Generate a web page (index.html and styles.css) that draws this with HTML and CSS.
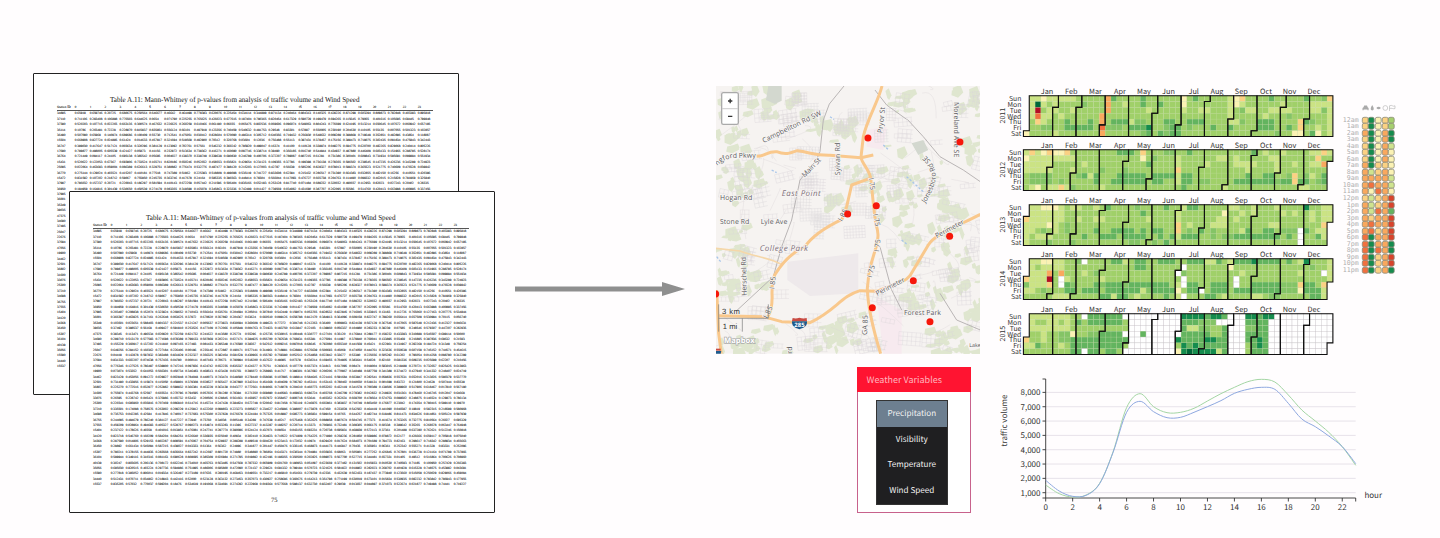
FILE: index.html
```html
<!DOCTYPE html>
<html lang="en">
<head>
<meta charset="utf-8">
<title>Traffic and weather</title>
<link rel="stylesheet" href="styles.css">
</head>
<body>
<main class="figure">
  <section class="papers">
    <article class="paper paper-back"></article>
    <article class="paper paper-front"></article>
  </section>

  <svg class="arrow" viewBox="0 0 172 16"><path d="M0 5.5H147V1L170 8L147 15V10.500H0Z"/></svg>

  <section class="middle">
    <svg class="map" viewBox="18 18 793 803">
      <rect class="land" x="18" y="18" width="793" height="803"/>
      <g id="greens"></g>
      <path class="airport" d="M232 545L445 520V640L300 648L232 600Z"/>
      <path class="pinkish" d="M500 650L575 690V821H520ZM470 150L530 140L520 210L470 200Z"/>
      <g id="streets"></g>
      <path class="pond" d="M175 18H215V62L195 72L168 60ZM605 190L640 180L655 210L625 225Z"/>
      <path class="rail" d="M402 18L358 72L340 120L330 215L318 242L270 300L245 420L215 500L190 590L80 692M592 118L640 170L690 230L760 270L811 305M510 500L545 630L575 690M495 30L530 75L590 118M690 640L740 720L811 750"/>
      <path class="water" d="M520 195L534 208M360 110L372 118M590 290L640 335M20 530L32 545M185 270L200 278M575 480L590 492"/>
      <g class="roads">
        <path class="minor" d="M18 505L90 513C130 530 180 532 212 552"/>
        <path d="M516 18C507 60 470 120 460 170L453 232C457 255 480 268 483 300L490 370L497 430C507 460 505 470 500 495L478 570L472 625C474 690 490 750 512 821"/>
        <path d="M140 229C170 228 170 213 200 215C225 225 240 220 262 212C300 216 310 227 360 226L453 233L490 225"/>
        <path d="M480 295L425 315L410 380L396 418C350 440 305 470 285 500C240 520 215 550 194 585L187 610L186 640C188 675 182 698 172 712"/>
        <path d="M26 707L160 710L215 725L300 728C380 690 390 650 450 632L500 634C550 612 580 612 600 587L655 495C675 462 740 440 811 403"/>
        <path d="M20 630L26 760L34 821"/>
      </g>
      <defs>
        <path id="p-langford" d="M6 276Q34 238 66 234L137 233"/>
        <path id="p-jonesboro" d="M646 370Q690 300 672 262Q660 232 624 208"/>
      </defs>
      <g class="labels">
        <text x="30" y="359" textLength="97">Hogan Rd</text>
        <text x="30" y="432" textLength="88">Stone Rd</text>
        <text x="152" y="432" textLength="80">Lyle Ave</text>
        <text x="582" y="706" textLength="111">Forest Park</text>
        <text class="small" x="778" y="801">Lake</text>
        <text class="city" x="215" y="348" textLength="117">East Point</text>
        <text class="city" x="149" y="512" textLength="145">College Park</text>
        <text transform="translate(161 189) rotate(-26)" textLength="194">Campbellton Rd SW</text>
        <text text-anchor="end"><textPath href="#p-langford" startOffset="100%">ngford Pkwy</textPath></text>
        <text transform="translate(284 293) rotate(-46)" textLength="72">Main St</text>
        <text transform="translate(391 286) rotate(-90)" textLength="98">Sylvan Rd</text>
        <text transform="translate(517 160) rotate(-84)" textLength="79">Pryor St</text>
        <text transform="translate(732 66) rotate(90)" textLength="166">Moreland Ave SE</text>
        <text><textPath href="#p-jonesboro">Jonesboro Rd SE</textPath></text>
        <text transform="translate(476 295) rotate(82)" textLength="36">I 75</text>
        <text transform="translate(489 403) rotate(78)" textLength="38">I 75</text>
        <text transform="translate(507 516) rotate(-83)" textLength="38">I 75</text>
        <text transform="translate(485 594) rotate(-75)" textLength="38">I 75</text>
        <text transform="translate(396 425) rotate(-62)" textLength="38">I 85</text>
        <text transform="translate(193 628) rotate(-84)" textLength="38">I 85</text>
        <text transform="translate(172 716) rotate(-64)" textLength="38">I 85</text>
        <text transform="translate(471 765) rotate(-88)" textLength="59">GA 85</text>
        <text transform="translate(110 647) rotate(-91)" textLength="116">Herschel Rd</text>
        <text transform="translate(680 475) rotate(-28)" textLength="95">Perimeter</text>
        <text transform="translate(502 648) rotate(-28)" textLength="95">Perimeter</text>
        <text transform="translate(246 821) rotate(-90)">rd</text>
      </g>
      <g class="shield">
        <path class="shield-blue" d="M246 724H291C292 738 284 743 268 748C253 743 245 738 246 724Z"/>
        <path class="shield-red" d="M248 714Q258 717 268 713Q280 717 290 714L291 723H246Z"/>
        <text x="268.500" y="741">285</text>
        <path class="shield-red" d="M18 806H32V812H18Z"/><path class="shield-blue" d="M18 813H34L32 821H18Z"/>
      </g>
      <g class="scale">
        <path d="M26 673V755M26 715H175V673M97 715V755"/>
        <text x="36" y="703" textLength="54">3 km</text>
        <text x="38" y="746" textLength="44">1 mi</text>
      </g>
      <text class="mapbox" x="42" y="788" textLength="92">Mapbox</text>
      <g class="dots">
        <circle cx="474" cy="174" r="10.500"/><circle cx="750" cy="186" r="10.500"/>
        <circle cx="499" cy="377" r="10.500"/><circle cx="413" cy="402" r="10.500"/>
        <circle cx="719" cy="469" r="10.500"/><circle cx="610" cy="602" r="10.500"/>
        <circle cx="487" cy="683" r="10.500"/><circle cx="660" cy="725" r="10.500"/>
        <circle cx="17" cy="642" r="10.500"/>
      </g>
      <g class="zoomer">
        <rect x="35" y="38" width="50" height="95" rx="5"/>
        <path class="zoomer-line" d="M36 86H84"/>
        <path class="zoomer-sign" d="M54 63H67M60.500 56.500V69.500M54 109H67"/>
      </g>
    </svg>

    <div class="weather">
      <h2 class="weather-title">Weather Variables</h2>
      <ul class="weather-list">
        <li class="weather-item selected">Precipitation</li>
        <li class="weather-item">Visibility</li>
        <li class="weather-item">Temperature</li>
        <li class="weather-item">Wind Speed</li>
      </ul>
    </div>
  </section>

  <section class="dashboard">
    <div class="upper">
      <div class="calendars" id="calendars"></div>
      <div class="hours">
        <svg class="hour-icons" viewBox="0 0 34 8">
          <path d="M.5 6.300V4L1.500 3.300L2.200 1.500H5L5.700 3.300L6.600 4V6.300H5.500V5.600H1.600V6.300Z"/>
          <path d="M10.200 1Q12.600 4.700 11.300 6Q10.200 6.800 9.200 6Q7.900 4.700 10.200 1Z"/>
          <path d="M14.300 4Q16.600 1.300 18.900 4Q16.600 6.700 14.300 4Z"/>
          <circle class="thin" cx="23.300" cy="4" r="2.400"/>
          <path class="thin" d="M27.500 7V1.800Q29.500 1 30.500 1.800T33 1.800V4.500Q32 5 30.500 4.500T27.500 4.500"/>
        </svg>
        <div class="hour-rows" id="hours"></div>
      </div>
    </div>
    <svg class="chart" id="chart" viewBox="990 370 410 150"></svg>
  </section>
</main>
<script src="main.js"></script>
</body>
</html>
```
FILE: styles.css
```css
body {
  margin: 0;
  background: #fffdfe;
  overflow: hidden;
  text-rendering: geometricPrecision;
}

.figure {
  display: flex;
  align-items: flex-start;
  width: 1440px;
  height: 538px;
  font-family: "Noto Sans CJK SC", "Noto Sans", sans-serif;
}

/* Printed tables */
.papers {
  display: grid;
  width: 462px;
  margin: 73px 0 0 33px;
  flex: none;
}
.paper {
  grid-area: 1 / 1;
  box-sizing: border-box;
  width: 426px;
  height: 322px;
  border: 1.500px solid #222;
  border-radius: 1px;
  background: #fff;
  padding: 20px 25px 0 22.500px;
  font-family: "Liberation Serif", serif;
  color: #111;
}
.paper-front {
  margin: 118px 0 0 36px;
}
.paper-title {
  display: block;
  width: 256px;
  height: 11px;
  margin-left: 53px;
  overflow: visible;
}
.paper-title text {
  font-size: 7.600px;
  fill: #111;
}
.row {
  display: grid;
  grid-template-columns: 18.300px repeat(24, 14.920px);
  height: 5.380px;
  line-height: 5.380px;
  font-size: 3.380px;
  -webkit-text-stroke: 0.070px #111;
  white-space: nowrap;
}
.row-head {
  font-size: 3.300px;
  border-bottom: 0.500px solid #555;
  width: 376px;
}
.row span:first-child {
  padding-left: 0.500px;
}
.page-number {
  text-align: center;
  font-size: 6.500px;
  line-height: 8px;
  margin: 10px 0 0 -13px;
}

.arrow {
  flex: none;
  width: 172px;
  height: 16px;
  margin: 281px 0 0 20px;
  fill: #8f8f8f;
}

/* Map and selector */
.middle {
  flex: none;
  width: 265px;
  margin: 86px 0 0 29px;
}
.map {
  display: block;
  width: 264.300px;
  height: 267.700px;
  overflow: hidden;
}
.land { fill: #f6f3f1; }
#greens { fill: #d3e0bd; opacity: 0.65; }
#streets { fill: none; stroke: #dad5d9; stroke-width: 1.100; }
.airport { fill: #eee9eb; }
.pinkish { fill: #f7eaef; }
.pond { fill: #d3d8cf; }
.rail { fill: none; stroke: #b9b5b5; stroke-width: 3; }
.water { fill: none; stroke: #a9c6ea; stroke-width: 4; stroke-dasharray: 7 5; }
.roads { fill: none; stroke: #f9c88c; stroke-width: 9; stroke-linejoin: round; }
.roads .minor { stroke: #f5d7a9; stroke-width: 5; }
.labels text {
  font-family: "Open Sans", sans-serif;
  font-size: 21px;
  fill: #5b5a5e;
  stroke: #f8f6f4;
  stroke-width: 4;
  paint-order: stroke;
}
.labels .city { font-size: 24px; font-style: italic; fill: #806f7b; }
.labels .small { font-size: 16px; }
.shield-blue { fill: #1d5a8d; }
.shield-red { fill: #c94b43; }
.shield text {
  font: bold 18px "Open Sans", sans-serif;
  fill: #fff;
  text-anchor: middle;
}
.scale path { fill: none; stroke: #777; stroke-width: 2; }
.scale text { font: 23px "Liberation Sans", sans-serif; fill: #333; }
.mapbox {
  font: bold 23px "Open Sans", sans-serif;
  fill: #fff;
  stroke: #aaa;
  stroke-width: 4;
  paint-order: stroke;
}
.dots { fill: #f6170a; }
.zoomer rect { fill: #fff; stroke: #aaa; stroke-width: 4; }
.zoomer-line { stroke: #ccc; stroke-width: 3; }
.zoomer-sign { stroke: #333; stroke-width: 4; }

.weather {
  box-sizing: border-box;
  width: 114px;
  height: 146px;
  margin: 13px 0 0 141px;
  border: 1px solid #c8628c;
  background: #fff;
}
.weather-title {
  margin: -1px 0 0 -1px;
  width: 114px;
  height: 25px;
  box-sizing: border-box;
  padding-left: 9.500px;
  background: #ff1431;
  color: #ffb6bf;
  font-size: 9px;
  line-height: 25px;
  font-weight: 400;
}
.weather-list {
  list-style: none;
  margin: 9.500px 0 0 18.500px;
  padding: 0;
  width: 70.500px;
  background: #1f1f21;
  outline: 0.500px solid #333;
}
.weather-item {
  height: 25.600px;
  line-height: 26px;
  font-size: 8.100px;
  text-align: center;
  color: #f2f2f2;
}
.weather-item.selected {
  background: #6d7f90;
}

/* Calendars, hours, chart */
.dashboard {
  flex: none;
  width: 410px;
  margin: 84px 0 0 9px;
}
.upper {
  display: flex;
  height: 286px;
}
.calendars {
  width: 345px;
}
.year {
  display: block;
  width: 345px;
  height: 54.400px;
}
.year text { font-size: 7.300px; fill: #333; }
.year .weekday { text-anchor: end; font-size: 6.800px; }
.year .month-name { text-anchor: middle; }
.year .year-name { text-anchor: middle; font-size: 7px; }
.day { stroke: #bfd69c; stroke-width: 0.200; }
.day-empty { stroke: #c8c4c8; stroke-width: 0.400; }
.month { fill: none; stroke: #111; stroke-width: 1.100; }

.hours {
  width: 65px;
  padding-top: 20px;
}
.hour-icons {
  display: block;
  width: 34px;
  height: 8px;
  margin-left: 26.500px;
  fill: #aaa;
}
.hour-icons .thin { fill: none; stroke: #bbb; stroke-width: 0.700; }
.hour-rows { padding-top: 4.600px; }
.hour-row {
  display: grid;
  grid-template-columns: 23.700px repeat(5, 6.100px);
  column-gap: 0.550px;
  align-items: center;
  height: 6.540px;
  font: 6.600px/6.540px "DejaVu Sans Mono", monospace;
  color: #b0b0b0;
}
.hour-row span { text-align: right; }
.hour-row svg { display: block; width: 6.500px; height: 6.540px; overflow: visible; margin-left: 2.500px; }
.hour-row rect { stroke: #8b8a78; stroke-width: 0.800; }

.chart {
  display: block;
  width: 410px;
  height: 150px;
}
.chart text { font-size: 8px; fill: #333; }
.chart .end { text-anchor: end; }
.chart .mid { text-anchor: middle; }
.gridline { stroke: #e4dfe8; stroke-width: 0.900; }
.axis { fill: none; stroke: #333; stroke-width: 0.900; }
.line-green { fill: none; stroke: #a4d6a4; stroke-width: 1; }
.line-blue { fill: none; stroke: #8ea8e0; stroke-width: 1; }
```
FILE: main.js
```js
function generator(seed) {
  return function () {
    seed = (seed * 16807) % 2147483647;
    return seed / 2147483647;
  };
}

/* Tables of p-values */
const stations = '34895 37110 37390 35114 36490 15504 36747 17690 36764 15431 25095 36770 15472 37997 36950 37995 36001 35349 39035 47375 34690 37485 25047 22676 37694 47056 19900 34462 32501 36802 31600 33076 25300 37210 34698 36755 37555 15404 34120 34368 36450 15307 36104 40139 35056 15590 34440 15537'.split(' ');
const firstRows = [
  '0.65919 0.659746 0.20725 0.680675 0.250564 0.646677 0.46642 0.464498 0.779383 0.620076 0.225454 0.634114 0.344889 0.871134 0.240464 0.804313 0.140325 0.428226 0.871298 0.603294 0.809873 0.792848 0.403393 0.895818',
  '0.711106 0.283408 0.106898 0.776503 0.644625 0.0654 0.071790 0.225255 0.765625 0.426023 0.677615 0.197404 0.790365 0.820454 0.617329 0.590729 0.199479 0.694265 0.115645 0.79065 0.401616 0.105695 0.69445 0.799848',
  '0.520203 0.107715 0.022265 0.663135 0.300574 0.467632 0.226625 0.260259 0.610466 0.061190 0.06655 0.065475 0.802536 0.069606 0.096074 0.549063 0.804243 0.776699 0.624195 0.513214 0.650645 0.107672 0.060942 0.657195'
].map(r => r.split(' '));
const rnd = generator(77);
const table = stations.map((id, i) => {
  const cells = firstRows[i] || Array.from({ length: 24 }, () => {
    const digits = rnd() < 0.12 ? 5 : 6;
    return (rnd() * 0.84).toFixed(digits);
  });
  return [id, ...cells];
});
function rowHtml(cells, extra) {
  return '<div class="row ' + extra + '">' + cells.map(c => '<span>' + c + '</span>').join('') + '</div>';
}
const header = ['Station ID', ...Array.from({ length: 24 }, (_, i) => i)];
const tableHtml =
  '<svg class="paper-title" viewBox="0 0 256 11"><text x="0" y="8" textLength="249.500" lengthAdjust="spacingAndGlyphs">Table A.11: Mann-Whitney of p-values from analysis of traffic volume and Wind Speed</text></svg>' +
  rowHtml(header, 'row-head') + table.map(r => rowHtml(r, '')).join('') +
  '<div class="page-number">75</div>';
document.querySelectorAll('.paper').forEach(p => { p.innerHTML = tableHtml; });

/* Map ground texture */
const m = generator(4242);
let greens = '';
const parks = [[90,40,70],[60,170,50],[220,60,60],[130,290,60],[60,310,60],[390,150,40],[560,60,40],[770,60,50],[570,250,70],[610,310,80],[550,370,60],[730,400,60],[640,440,80],[560,500,50],[760,560,70],[700,600,60],[50,470,50],[60,560,60],[40,620,40],[130,600,30],[80,800,60],[170,770,50],[330,770,50],[400,740,50],[610,650,50],[760,780,50],[680,780,40],[440,290,40],[370,370,30],[790,200,40],[320,120,40],[790,680,30]];
parks.forEach(([cx, cy, r]) => {
  for (let k = 0; k < 12; k++) {
    const x = cx + (m() - 0.5) * r * 2, y = cy + (m() - 0.5) * r * 1.7;
    const a = 6 + m() * 24, b = 5 + m() * 20;
    greens += `<path d="M${x} ${y}l${a} ${-b * 0.4}l${b * 0.4} ${b}l${-a * 0.7} ${b * 0.7}l${-a * 0.6} ${-b * 0.3}Z"/>`;
  }
});
document.getElementById('greens').innerHTML = greens;
let streets = '';
for (let k = 0; k < 170; k++) {
  const x = 18 + m() * 780, y = 18 + m() * 790;
  if (x > 190 && x < 450 && y > 490 && y < 660) continue;
  const dense = y < 460 && x > 230 && x < 540;
  const n = dense ? 5 : 2 + Math.floor(m() * 3), s = dense ? 9 : 13, w = 25 + m() * 45;
  let d = '';
  for (let i = 0; i < n; i++) d += `M0 ${i * s}H${w}`;
  for (let i = 0; i < w / s; i++) d += `M${i * s} 0V${(n - 1) * s}`;
  streets += `<path transform="translate(${x} ${y}) rotate(${(m() - 0.5) * (dense ? 8 : 30)})" d="${d}"/>`;
}
for (let k = 0; k < 60; k++) {
  const x = 18 + m() * 780, y = 18 + m() * 800;
  if (x > 200 && x < 450 && y > 500 && y < 660) continue;
  streets += `<path d="M${x} ${y}q${m() * 60} ${m() * 50 - 25} ${(m() - 0.5) * 160} ${(m() - 0.5) * 160}"/>`;
}
document.getElementById('streets').innerHTML = streets;

/* Calendars */
const colors = {
  b: '#a0d069', l: '#cbe384', y: '#fbf2b4', e: '#fbd183', o: '#f9a85e', n: '#f1703f', r: '#b30f24',
  m: '#84c466', g: '#63b45f', G: '#158c4e', D: '#00683a', w: '#fff'
};
/* Patches: colour, week, weekday, weeks, days */
const patches = {
  2011: 'l1,0,4,4 y3,0,1,1 b4,1,1,1 b3,2,1,1 l2,4,2,1 m4,5,1,1 D2,1,1,1 r2,2,1,1 n2,3,1,1 e2,4,1,1 y0,6,1,1 l5,0,2,1 l7,0,2,1 l5,1,1,2 l6,3,1,1 l5,6,1,1 g7,4,1,1 g7,5,5,1 g11,4,1,1 o14,0,1,3 o13,3,1,1 o13,4,1,1 n13,5,1,1 o13,6,1,1 g15,0,1,1 m14,5,2,1 g15,4,3,1 l18,4,1,1 m19,4,2,1 g20,0,1,2 g18,5,3,1 G21,5,1,1 g21,6,1,1 l21,2,1,1 g23,1,1,1 g24,4,2,1 g23,6,1,1 g25,5,2,2 y27,0,1,2 l27,2,1,1 g29,0,1,1 g28,4,3,1 m28,5,1,1 l30,2,2,1 g32,5,1,1 l35,0,1,4 g35,5,1,1 y36,0,1,2 e37,0,1,1 l37,1,1,1 l38,2,2,1 l36,4,1,1 g40,4,3,2 g42,0,1,1 l42,2,2,1 l44,1,1,2 g45,5,1,1 m43,6,1,1 e47,4,1,2 y46,6,2,1 g48,0,1,1 g48,4,1,1 g49,6,1,1 l49,1,3,2 l52,0,1,7 e52,0,1,1 m51,2,1,1 l50,5,1,1 y50,6,1,1',
  2012: 'l0,0,5,4 e1,0,1,1 y3,0,1,1 e4,0,1,1 y0,1,1,1 l1,5,2,2 m1,4,4,2 y2,6,1,1 l4,6,2,1 y5,0,2,1 e7,0,1,1 l5,1,1,1 l6,1,3,1 l10,2,1,1 l8,3,1,1 m6,5,1,1 e6,6,1,1 l7,6,1,1 g10,4,1,1 g12,4,1,2 m13,3,1,1 g16,0,3,1 g15,5,5,1 g16,4,2,1 g18,4,3,2 l13,6,1,1 e20,0,1,1 y20,1,1,1 g21,2,1,1 g22,4,4,1 g22,5,2,1 l26,1,1,5 e26,3,1,1 m24,0,2,1 g27,4,2,2 g28,0,1,1 g27,6,1,1 m30,5,2,1 l31,2,1,1 l33,1,2,1 l36,2,4,1 l36,1,1,2 l38,3,1,2 g36,5,7,1 g38,4,1,1 g41,4,2,1 g39,0,1,1 l41,0,1,1 l42,1,2,1 l43,2,1,2 g44,5,2,1 e46,4,1,2 g47,5,2,1 l47,6,2,1 l46,2,1,1 l49,0,4,1 e51,0,1,1 e50,1,1,1 o51,2,1,1 l49,2,2,1 m50,5,1,1 g51,4,1,2',
  2013: 'l1,0,5,4 y3,0,2,1 e0,2,1,1 l0,3,1,4 y4,3,1,1 l2,5,3,1 m3,4,1,1 y5,0,1,1 l6,0,1,3 l5,4,1,1 m7,4,1,1 m4,6,1,1 g10,5,1,1 l12,0,1,1 g12,4,1,1 l8,0,2,1 l12,2,2,1 g14,0,1,1 g13,5,3,1 g15,4,4,1 g17,5,4,1 g20,4,1,1 m18,6,2,1 g20,1,1,1 m19,0,1,1 g24,0,1,1 g22,4,2,1 g23,5,1,1 g25,5,1,1 m22,6,1,1 g24,6,1,1 e26,3,1,2 l26,1,1,2 l26,5,1,1 g28,0,2,1 g27,5,3,1 l28,3,1,1 g30,4,1,1 m32,5,1,1 l33,2,2,2 y34,1,1,1 l35,0,2,1 g36,5,4,1 g38,4,1,1 g40,5,4,1 g41,4,2,1 l39,0,1,2 l43,0,1,1 l42,3,2,1 m44,4,3,1 g45,5,1,1 w47,4,1,3 G48,0,1,1 g48,4,1,1 l49,1,1,2 l51,0,2,3 e51,3,1,1 l50,4,2,2 g50,5,1,1',
  2014: 'l1,0,4,3 y3,0,1,1 y4,0,1,1 b2,1,1,1 o4,2,1,1 r4,3,1,1 e4,4,1,1 l0,3,4,1 e0,3,1,1 l1,4,3,1 m3,5,1,1 l0,5,2,1 l5,6,3,1 o6,2,1,1 w6,3,1,2 g7,4,1,2 l5,0,2,2 w10,0,1,1 l10,2,1,1 m9,0,1,1 g8,5,1,1 g10,5,2,1 g12,4,1,2 l13,3,1,1 g14,4,3,2 g13,6,2,1 l15,6,1,1 g16,5,1,2 g15,0,2,1 g19,0,2,2 g18,4,3,2 g17,5,1,2 l20,5,1,1 g21,4,4,1 g22,5,4,1 g23,0,3,1 l17,0,1,1 w26,2,1,1 y26,5,1,1 l26,4,1,1 g24,6,1,1 w27,1,1,1 w27,3,1,2 w27,6,1,1 g28,0,3,1 w30,5,1,1 g28,4,2,2 g32,4,3,2 g31,6,2,1 g33,0,1,1 l35,0,1,1 y35,1,1,1 g36,0,3,1 G39,0,1,1 w36,3,1,2 l37,2,1,1 g36,5,3,1 g39,4,5,2 g40,0,4,1 l39,6,2,1 m42,6,2,1 m44,4,3,2 g45,0,1,1 l47,0,1,1 y47,4,1,2 e47,4,1,1 G48,0,1,1 g48,4,2,2 l47,2,1,1 w51,2,1,1 e51,4,1,1 g49,5,2,2 l51,5,1,2 l52,0,1,3',
  2015: 'l1,0,4,3 b2,1,2,1 e0,4,1,1 l0,5,2,1 g2,5,1,1 l3,3,1,2 b0,6,9,1 l5,0,3,3 b6,1,1,1 y8,3,1,1 m6,3,2,2 l6,5,1,1 g8,4,2,3 w10,0,1,1 g11,0,3,2 g10,4,3,3 w10,6,1,1 g9,1,1,1 g14,0,3,2 g13,3,4,3 g14,6,2,1 m12,3,1,1 w17,0,1,1 b17,1,1,2 w17,3,1,1 g17,4,1,1 w18,0,9,7 w17,6,1,1 g20,3,1,1 b26,3,1,4 w26,3,1,1 G26,4,1,1 y26,6,1,1 w26,0,1,3 g27,0,8,7 G27,0,4,1 G32,0,2,1 l28,2,2,1 m30,1,4,2 b32,2,2,2 G31,4,2,1 G27,5,1,2 G29,5,1,2 D28,6,1,1 G30,6,3,1 l33,6,1,1 w34,1,1,1 w35,0,3,7 w34,2,1,1 g34,2,1,5 w35,1,3,6 g34,0,1,1 w33,1,2,1 g38,0,4,7 G38,0,2,1 m38,2,2,1 b38,5,1,2 G40,4,1,2 w42,0,11,7 G41,0,2,1'
};
const cell = 5.84, left = 33.4, top0 = 11.7;
const names = ['Jan', 'Feb', 'Mar', 'Apr', 'May', 'Jun', 'Jul', 'Aug', 'Sep', 'Oct', 'Nov', 'Dec'];
const weekdays = ['Sun', 'Mon', 'Tue', 'Wed', 'Thu', 'Fri', 'Sat'];
const nameX = [57, 81.3, 105.5, 130, 154, 178.5, 203.7, 227, 251.3, 276, 299.5, 324];
const shade = generator(99);
let years = '';
Object.keys(patches).forEach(year => {
  const start = new Date(Date.UTC(year, 0, 1)).getUTCDay();
  const length = (Date.UTC(+year + 1, 0, 1) - Date.UTC(year, 0, 1)) / 864e5;
  const grid = Array.from({ length: 54 }, () => Array.from({ length: 7 }, (_, r) => {
    const v = shade();
    return v < 0.03 ? 'l' : v < (r > 3 && r < 6 ? 0.14 : 0.05) ? 'm' : 'b';
  }));
  patches[year].split(' ').forEach(p => {
    const [x, y, w, h] = p.slice(1).split(',').map(Number);
    for (let i = x; i < x + w && i < 54; i++) for (let j = y; j < y + h && j < 7; j++) grid[i][j] = p[0];
  });
  let out = '';
  for (let d = 0; d < length; d++) {
    const week = Math.floor((d + start) / 7), wd = (d + start) % 7, c = grid[week][wd];
    out += `<rect class="day${c === 'w' ? ' day-empty' : ''}" x="${(left + week * cell).toFixed(2)}" y="${(top0 + wd * cell).toFixed(2)}" width="${cell}" height="${cell}" fill="${colors[c]}"/>`;
  }
  names.forEach((name, i) => {
    const a = (Date.UTC(year, i, 1) - Date.UTC(year, 0, 1)) / 864e5 + start;
    const b = (Date.UTC(year, i + 1, 0) - Date.UTC(year, 0, 1)) / 864e5 + start;
    const w0 = Math.floor(a / 7), d0 = a % 7, w1 = Math.floor(b / 7), d1 = b % 7;
    const X = v => (left + v * cell).toFixed(2), Y = v => (top0 + v * cell).toFixed(2);
    out += `<path class="month" d="M${X(w0 + 1)} ${Y(d0)}H${X(w0)}V${Y(7)}H${X(w1)}V${Y(d1 + 1)}H${X(w1 + 1)}V${Y(0)}H${X(w0 + 1)}Z"/>`;
    out += `<text class="month-name" x="${nameX[i]}" y="10">${name}</text>`;
  });
  weekdays.forEach((name, i) => { out += `<text class="weekday" x="31.300" y="${top0 + 5.4 + i * cell}">${name}</text>`; });
  out += `<text class="year-name" transform="translate(14.700 ${top0 + 20}) rotate(-90)">${year}</text>`;
  years += `<svg class="year" viewBox="0 0 345 54.400">${out}</svg>`;
});
document.getElementById('calendars').innerHTML = years;

/* Hour matrix */
const hourColors = [
  'eGyem', 'eGyem', 'oGyoG', 'eGyoG', 'eGyol', 'eGyoy', 'eGyoy', 'oGeey', 'oleoy', 'ooool', 'onool', 'oynoy',
  'eleor', 'oleor', 'olnog', 'oeoor', 'onoor', 'oneor', 'nGoor', 'nGooG', 'nGnoG', 'nGeor', 'nGeor', 'nGeoG'];
const hourFill = Object.assign({}, colors, { r: '#d8432c', m: '#a5cf6f', l: '#cfe48f' });
document.getElementById('hours').innerHTML = hourColors.map((row, h) =>
  `<div class="hour-row"><span>${h % 12 || 12}${h < 12 ? 'am' : 'pm'}</span>` +
  [...row].map(c => `<svg viewBox="0 0 6.500 6.540"><rect x=".3" y=".3" width="5.900" height="5.900" rx="1.700" fill="${hourFill[c]}"/></svg>`).join('') +
  '</div>').join('');

/* Traffic volume chart; curve values are thirds of a pixel below y=360 */
const green = [375, 401, 411, 405, 370, 275, 143, 101, 140, 158, 157, 145, 123, 101, 82, 65, 58, 66, 105, 150, 183, 217, 260, 316];
const blue = [361, 393, 409, 406, 371, 277, 157, 124, 155, 173, 172, 157, 140, 122, 100, 88, 82, 88, 130, 177, 200, 228, 260, 311];
const hx = h => 1045.7 + h * 13.48;
function curve(values) {
  const p = values.map((v, i) => [hx(i), 360 + v / 3]);
  let d = 'M' + p[0];
  for (let i = 0; i < p.length - 1; i++) {
    const a = p[i - 1] || p[i], b = p[i], c = p[i + 1], e = p[i + 2] || c;
    d += `C${b[0] + (c[0] - a[0]) / 6} ${b[1] + (c[1] - a[1]) / 6} ${c[0] - (e[0] - b[0]) / 6} ${c[1] - (e[1] - b[1]) / 6} ${c}`;
  }
  return d;
}
let chart = '';
for (let v = 1; v <= 8; v++) {
  const y = 492.7 - (v - 1) * 14.33;
  chart += `<path class="gridline" d="M1045.700 ${y}H1355.700"/><path class="axis" d="M1042.500 ${y}H1045.700"/>`;
  chart += `<text class="end" x="1040.500" y="${y + 3}">${v},000</text>`;
}
for (let h = 0; h <= 22; h += 2) {
  chart += `<path class="axis" d="M${hx(h)} 498V501.500"/><text class="mid" x="${hx(h)}" y="510">${h}</text>`;
}
chart += '<path class="axis" d="M1042.500 379H1045.700V498M1042.500 498H1355.700V501.500"/>';
chart += `<path class="line-green" d="${curve(green)}"/><path class="line-blue" d="${curve(blue)}"/>`;
chart += '<text class="mid" transform="translate(1007.300 420.500) rotate(-90)" textLength="52">traffic volume</text>';
chart += '<text x="1364.500" y="498" textLength="17.500">hour</text>';
document.getElementById('chart').innerHTML = chart;
```
